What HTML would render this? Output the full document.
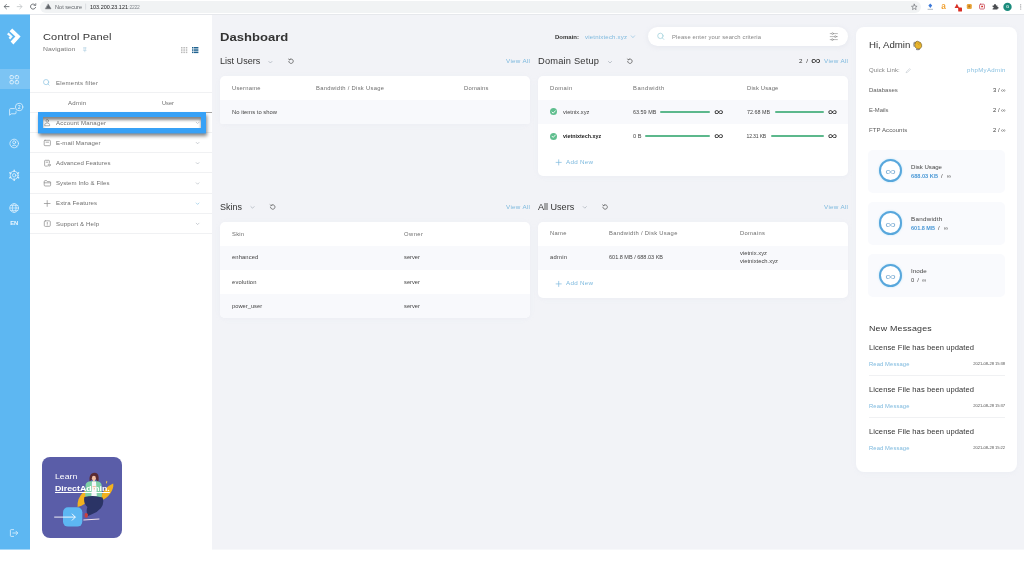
<!DOCTYPE html>
<html lang="en">
<head>
<meta charset="utf-8">
<title>DirectAdmin Dashboard</title>
<style>
*{box-sizing:border-box;margin:0;padding:0}
html,body{width:1024px;height:580px;overflow:hidden;background:#fff}
body{font-family:"Liberation Sans",sans-serif;position:relative;color:#333}
.a{position:absolute}
.t{position:absolute;white-space:nowrap}
#tx{position:absolute;left:0;top:0;width:1024px;height:580px;will-change:transform}
#chrome{left:0;top:0;width:1024px;height:15px;background:#fff;border-bottom:1px solid #e6e8ec}
#url{left:40px;top:1px;width:881px;height:11.5px;border-radius:6px;background:#f1f3f4}
#side{left:0;top:15px;width:30px;height:534px;background:#5db7f2}
#sideact{left:0;top:69px;width:30px;height:20px;background:#7cc4f4}
#nav{left:30px;top:15px;width:182px;height:534px;background:#fff}
#main{left:211.5px;top:15px;width:812.5px;height:534px;background:#f2f3f7}
.hl{height:1px;background:#f0f1f3}
.card{background:#fff;border-radius:5px;box-shadow:0 1px 5px rgba(200,205,220,.12)}
.stripe{background:#f8f9fc}
.bar{height:1.6px;background:#5cb88c;border-radius:1px}
.box{background:#f9fafd;border-radius:5px}
.ring{border:2.1px solid #58a7dc;border-radius:50%;background:#fff;box-shadow:0 0 2px rgba(120,205,245,.55)}
svg{position:absolute;overflow:visible}
</style>
</head>
<body>
<!-- browser chrome -->
<div id="chrome" class="a"></div>
<div id="url" class="a"></div>
<svg style="left:0;top:.4px" width="1024" height="15" viewBox="0 0 1024 15" fill="none" stroke-linecap="round" stroke-linejoin="round">
 <!-- back / forward / reload -->
 <path d="M9 6.6 H4.4 M6.4 4.4 L4.2 6.6 L6.4 8.8" stroke="#5f6368" stroke-width=".85"/>
 <path d="M17.2 6.6 H21.8 M19.8 4.4 L22 6.6 L19.8 8.8" stroke="#c4c7ca" stroke-width=".85"/>
 <path d="M35.2 5 A2.6 2.6 0 1 0 35.6 7.4" stroke="#5f6368" stroke-width=".85"/>
 <path d="M35.8 3.6 V5.4 H34" stroke="#5f6368" stroke-width=".7"/>
 <!-- warning -->
 <path d="M48.3 4.2 L51 8.8 H45.6 Z" fill="#5f6368" stroke="#5f6368" stroke-width=".5"/>
 <path d="M85.6 4 V9.2" stroke="#c8cbcf" stroke-width=".5"/>
 <!-- star -->
 <path d="M914.3 4.2 L915.1 6.1 L917.1 6.3 L915.6 7.6 L916.1 9.6 L914.3 8.5 L912.5 9.6 L913 7.6 L911.5 6.3 L913.5 6.1 Z" stroke="#5f6368" stroke-width=".6"/>
 <!-- extensions -->
 <path d="M930.3 3.4 L932.2 5.6 L930.3 8 L928.4 5.6 Z" fill="#3b78d8"/>
 <path d="M928 9.3 H932.6" stroke="#9aa7b8" stroke-width=".8"/>
 <path d="M954.6 8 L956.9 3.8 L959.2 8 Z" fill="#d93025"/>
 <rect x="958.2" y="7.6" width="3.8" height="4" rx=".6" fill="#d93025"/>
 <rect x="966.8" y="4" width="5" height="5" rx="1.2" fill="#e9a63c"/>
 <circle cx="969.3" cy="6.4" r="1.1" fill="#b9791f"/>
 <rect x="979.6" y="4.2" width="4.8" height="4.8" rx=".8" stroke="#c5475b" stroke-width=".8"/>
 <path d="M981.2 5.8 H983 V7.6 L982.1 7 L981.2 7.6 Z" fill="#d93025"/>
 <path d="M992.6 5.6 H994 Q993.6 4 995 4 Q996.4 4 996 5.6 H997.4 V7 Q998.8 6.8 998.6 8 Q998.4 8.8 997.4 8.6 V9.6 H992.6 V8.4 Q993.8 8.6 993.8 7.6 Q993.8 6.8 992.6 7 Z" fill="#4a4d51"/>
 <circle cx="1007.5" cy="6.9" r="4.2" fill="#1b8b7c"/>
 <circle cx="1020.7" cy="4.8" r=".6" fill="#8a8d91"/><circle cx="1020.7" cy="6.9" r=".6" fill="#8a8d91"/><circle cx="1020.7" cy="9" r=".6" fill="#8a8d91"/>
</svg>

<!-- app -->
<div class="a" style="left:0;top:14px;width:30px;height:1px;background:#9fd2f5"></div>
<div id="side" class="a"></div>
<div id="sideact" class="a"></div>
<div class="a" style="left:0;top:549px;width:30px;height:1px;background:#a6d8f8"></div>
<div class="a" style="left:211.5px;top:549px;width:812.5px;height:1px;background:#f7f8fa"></div>
<div id="nav" class="a"></div>
<div id="main" class="a"></div>
<!-- nav panel lines -->
<div class="a hl" style="left:30px;top:92px;width:182px"></div>
<div class="a hl" style="left:30px;top:112px;width:182px"></div>
<div class="a hl" style="left:30px;top:132px;width:182px"></div>
<div class="a hl" style="left:30px;top:152px;width:182px"></div>
<div class="a hl" style="left:30px;top:172px;width:182px"></div>
<div class="a hl" style="left:30px;top:193px;width:182px"></div>
<div class="a hl" style="left:30px;top:213px;width:182px"></div>
<div class="a hl" style="left:30px;top:233px;width:182px"></div>
<!-- nav icons -->
<svg style="left:0;top:0" width="212" height="580" viewBox="0 0 212 580" fill="none" stroke="#8a8a8a" stroke-width=".7" stroke-linecap="round" stroke-linejoin="round">
 <!-- pin -->
 <path d="M83.6 47.8 H86 M84 47.8 V49.6 L83.4 50.4 H86.2 L85.6 49.6 V47.8 M84.8 50.4 V51.8" stroke="#a9cbe0" stroke-width=".55"/>
 <!-- grid 3x3 -->
 <g stroke="none" fill="#b9b9b9">
  <rect x="181" y="47" width="1.5" height="1.5"/><rect x="183.4" y="47" width="1.5" height="1.5"/><rect x="185.8" y="47" width="1.5" height="1.5"/>
  <rect x="181" y="49.3" width="1.5" height="1.5"/><rect x="183.4" y="49.3" width="1.5" height="1.5"/><rect x="185.8" y="49.3" width="1.5" height="1.5"/>
  <rect x="181" y="51.6" width="1.5" height="1.5"/><rect x="183.4" y="51.6" width="1.5" height="1.5"/><rect x="185.8" y="51.6" width="1.5" height="1.5"/>
 </g>
 <!-- list -->
 <g stroke="none" fill="#1f628f">
  <rect x="192" y="47" width="1.5" height="1.5"/><rect x="194" y="47" width="4.4" height="1.5"/>
  <rect x="192" y="49.3" width="1.5" height="1.5"/><rect x="194" y="49.3" width="4.4" height="1.5"/>
  <rect x="192" y="51.6" width="1.5" height="1.5"/><rect x="194" y="51.6" width="4.4" height="1.5"/>
 </g>
 <!-- search -->
 <g stroke="#8ec4e2" stroke-width=".7"><circle cx="46.1" cy="82.1" r="2.6"/><path d="M48 84 L49.2 85.2"/></g>
 <!-- account -->
 <g><circle cx="47.2" cy="120.9" r="1.3"/><path d="M44.8 125.4 V124.6 Q44.8 123 47.2 123 Q49.6 123 49.6 124.6 V125.4 Z"/></g>
 <!-- email -->
 <g><rect x="44.2" y="140.3" width="6.2" height="5.4" rx=".8"/><path d="M46 142.2 H48.6"/></g>
 <!-- advanced -->
 <g><path d="M49.4 162.6 V161 Q49.4 160.3 48.7 160.3 H45.3 Q44.6 160.3 44.6 161 V165.4 Q44.6 166.1 45.3 166.1 H47.4"/><circle cx="49.2" cy="165" r="1.1"/><path d="M46.2 162.2 H47.8"/></g>
 <!-- files -->
 <g><path d="M44.2 181.4 Q44.2 180.6 45 180.6 H46.6 L47.4 181.6 H49.8 Q50.6 181.6 50.6 182.4 V185.2 Q50.6 186 49.8 186 H45 Q44.2 186 44.2 185.2 Z"/><path d="M44.2 182.8 H50.6"/></g>
 <!-- plus -->
 <g><path d="M47.2 200.6 V206.4 M44.3 203.5 H50.1"/></g>
 <!-- support -->
 <g><rect x="44.3" y="220.8" width="6" height="5.6" rx="1"/><path d="M47.3 222.4 V223.8 M47.3 224.9 V225"/></g>
 <!-- chevrons -->
 <g stroke="#a9b0b8" stroke-width=".6">
  <path d="M196.2 122.2 l1.4 1.4 l1.4 -1.4"/><path d="M196.2 142.4 l1.4 1.4 l1.4 -1.4"/><path d="M196.2 162.6 l1.4 1.4 l1.4 -1.4"/>
  <path d="M196.2 182.8 l1.4 1.4 l1.4 -1.4"/><path d="M196.2 203 l1.4 1.4 l1.4 -1.4" stroke="#7fbfe0"/><path d="M196.2 223.2 l1.4 1.4 l1.4 -1.4"/>
 </g>
</svg>
<div class="a" style="left:205px;top:112px;width:6.5px;height:1px;background:#a5a5a5"></div>
<!-- highlight box -->
<div class="a" style="left:38px;top:112px;width:168px;height:21px;border:5px solid #37a1f6;box-shadow:1px 3px 3.5px rgba(0,0,0,.48), inset 0 3px 3px rgba(0,0,0,.48)"></div>
<svg style="left:0;top:0" width="212" height="140" viewBox="0 0 212 140"><rect x="38" y="132.8" width="168" height=".6" fill="#37a1f6"/></svg>
<!-- promo card -->
<div class="a" style="left:42.2px;top:457.4px;width:80.2px;height:80.2px;border-radius:8px;background:#5a5da8"></div>
<svg style="left:0;top:0" width="212" height="580" viewBox="0 0 212 580">
 <!-- yellow leaves -->
 <path d="M77.6 507 Q77 498 83 492.5 Q87 488.8 90.4 487.4 Q91.6 492 89 498 Q86 505 77.6 507 Z" fill="#f3b21e"/>
 <path d="M100.6 500.5 Q101 494 105.4 489 Q109 485 113.2 483.4 Q114 487.6 110.6 493 Q106.6 499 100.6 500.5 Z" fill="#f3b21e"/>
 <path d="M106 480.4 l.6 1.2 l1.2 .2 l-1 .8 l.2 1.2 l-1 -.7 Z" fill="#f3c84a"/>
 <!-- hair -->
 <path d="M89.6 481.4 Q88.6 474.6 93 473 Q98 472 98.6 477 Q99 480 98 482 L95.6 479 L92 479.4 Z" fill="#5a2b34"/>
 <!-- face & neck -->
 <ellipse cx="93.9" cy="478.2" rx="2" ry="2.4" fill="#f3bfa3"/>
 <rect x="92.9" y="480" width="2" height="2.4" fill="#f3bfa3"/>
 <!-- jacket -->
 <path d="M85.6 484.6 Q86.4 481.6 90.6 481.2 L97.4 481.2 Q101 481.8 101.6 485 L102 496.6 Q98 498.6 94 498.2 Q89 498.4 85.2 496.4 Z" fill="#7fd0a6"/>
 <!-- shirt -->
 <path d="M92 481.4 L96 481.4 L96.8 496 L91.4 496 Z" fill="#f6f6fa"/>
 <path d="M92.6 486 h3.2 v3.4 h-3.2 Z" fill="#f3bfa3"/>
 <!-- pants -->
 <path d="M84.4 497 Q93 494.6 102.6 497.4 Q104.6 503 101 508 Q97 512.6 92.4 514 L88 516 Q85.6 512 87.4 507 Q83 503 84.4 497 Z" fill="#2b3466"/>
 <!-- shoe -->
 <path d="M84.8 513.4 Q86.6 512.4 88 514.2 L87.4 517.6 Q85.4 518 84.6 516.4 Z" fill="#c9413e"/>
 <!-- floor -->
 <path d="M83.4 519.4 L99.4 518.4 L99.4 519.6 L83.4 520.6 Z" fill="#f3e3ea"/>
 <!-- arrow button -->
 <rect x="63" y="507.3" width="19.3" height="19.3" rx="5" fill="#5db7f2"/>
 <path d="M54.6 517.1 H75 M72.2 514 L75.3 517.1 L72.2 520.2" fill="none" stroke="#fff" stroke-width=".9" stroke-linecap="round" stroke-linejoin="round"/>
</svg>
<!-- search pill -->
<div class="a" style="left:648px;top:27px;width:200px;height:19px;border-radius:9.5px;background:#fff;box-shadow:0 1px 5px rgba(200,205,220,.3)"></div>
<!-- cards -->
<div class="a card" style="left:220px;top:76px;width:310px;height:48px"></div>
<div class="a stripe" style="left:220px;top:100px;width:310px;height:24px;border-radius:0 0 2px 2px"></div>
<div class="a card" style="left:538px;top:76px;width:310px;height:100px"></div>
<div class="a stripe" style="left:538px;top:100px;width:310px;height:24px"></div>
<div class="a card" style="left:220px;top:222px;width:310px;height:96px"></div>
<div class="a stripe" style="left:220px;top:246px;width:310px;height:24px"></div>
<div class="a stripe" style="left:220px;top:294px;width:310px;height:24px;border-radius:0 0 5px 5px"></div>
<div class="a card" style="left:538px;top:222px;width:310px;height:75.5px"></div>
<div class="a stripe" style="left:538px;top:246px;width:310px;height:24px"></div>
<!-- bars -->
<div class="a bar" style="left:660.3px;top:111.2px;width:49.3px"></div>
<div class="a bar" style="left:645.4px;top:135.2px;width:64.2px"></div>
<div class="a bar" style="left:774.8px;top:111.2px;width:49px"></div>
<div class="a bar" style="left:771.2px;top:135.2px;width:52.6px"></div>
<!-- check circles -->
<div class="a" style="left:550.2px;top:108.4px;width:7px;height:7px;border-radius:50%;background:#5fbe8e"></div>
<div class="a" style="left:550.2px;top:132.6px;width:7px;height:7px;border-radius:50%;background:#5fbe8e"></div>
<!-- right panel -->
<div class="a card" style="left:856.3px;top:27px;width:161px;height:444.5px;border-radius:8px"></div>
<div class="a box" style="left:868.2px;top:150.3px;width:137.2px;height:43px"></div>
<div class="a box" style="left:868.2px;top:202px;width:137.2px;height:43px"></div>
<div class="a box" style="left:868.2px;top:253.7px;width:137.2px;height:43px"></div>
<div class="a ring" style="left:878.7px;top:158.6px;width:23.6px;height:23.6px"></div>
<div class="a ring" style="left:878.7px;top:211.2px;width:23.6px;height:23.6px"></div>
<div class="a ring" style="left:878.7px;top:263.7px;width:23.6px;height:23.6px"></div>
<div class="a hl" style="left:868.6px;top:375px;width:136.6px"></div>
<div class="a hl" style="left:868.6px;top:417px;width:136.6px"></div>
<!-- sidebar icons -->
<svg style="left:0;top:0" width="30" height="580" viewBox="0 0 30 580" fill="none" stroke="#fff" stroke-linecap="round" stroke-linejoin="round">
 <!-- logo -->
 <g stroke="none" fill="#fff">
  <path d="M12.2 28.6 L20.6 36.6 L13.4 44.4 L10.6 41.6 L15.4 36.6 L9.6 31.2 Z"/>
  <path d="M8.6 32.6 L12.8 36.6 L10.2 39.4 L8.6 37.8 L9.8 36.6 L7 34.2 Z" opacity=".95"/>
 </g>
 <!-- dashboard 2x2 -->
 <g stroke-width=".9" opacity=".8">
  <rect x="10" y="75.6" width="3.4" height="3.2" rx="1.1"/>
  <rect x="15.2" y="75.6" width="3.4" height="3.2" rx="1.1"/>
  <rect x="10" y="80.6" width="3.4" height="3.2" rx="1.1"/>
  <rect x="15.2" y="80.6" width="3.4" height="3.2" rx="1.1"/>
 </g>
 <!-- messages -->
 <g stroke-width=".85" opacity=".78">
  <path d="M14.4 108.6 H10.6 Q9.6 108.6 9.6 109.6 V115.2 L11.2 113.8 H15 Q16 113.8 16 112.8 V111.6"/>
  <circle cx="19.1" cy="107" r="3.7"/>
 </g>
 <!-- user -->
 <g stroke-width=".85" opacity=".78">
  <circle cx="14.2" cy="143.5" r="4.3"/>
  <circle cx="14.2" cy="142.3" r="1.5"/>
  <path d="M11.4 146.6 Q14.2 143.4 17 146.6"/>
 </g>
 <!-- gear -->
 <g stroke-width=".85" opacity=".78">
  <circle cx="14.2" cy="175.3" r="4"/>
  <circle cx="14.2" cy="175.3" r="1.7"/>
  <path d="M14.2 170.2v1.2M14.2 179.2v1.2M9.8 172.8l1 .6M17.6 177.2l1 .6M9.8 177.8l1-.6M17.6 173.4l1-.6" stroke-width="1.4"/>
 </g>
 <!-- globe -->
 <g stroke-width=".75" opacity=".78">
  <circle cx="14.2" cy="208" r="4.4"/>
  <ellipse cx="14.2" cy="208" rx="1.9" ry="4.4"/>
  <path d="M9.8 208h8.8M10.6 205.6h7.2M10.6 210.4h7.2"/>
 </g>
 <!-- logout -->
 <g stroke-width=".85" opacity=".78">
  <path d="M13.6 529.6 H11.2 Q10.4 529.6 10.4 530.4 V535.6 Q10.4 536.4 11.2 536.4 H13.6"/>
  <path d="M12.8 533 H17.6 M16 531.2 L17.8 533 L16 534.8"/>
 </g>
</svg>
<!-- main icons -->
<svg style="left:0;top:0" width="1024" height="580" viewBox="0 0 1024 580" fill="none" stroke="#444" stroke-width=".7" stroke-linecap="round" stroke-linejoin="round">
 <!-- domain dropdown chevron -->
 <path d="M631.2 35.8 l1.7 1.9 l1.7 -1.9" stroke="#93c4e2"/>
 <!-- search -->
 <g stroke="#98cdd8"><circle cx="660.4" cy="35.9" r="2.7"/><path d="M662.4 38 L663.8 39.4"/></g>
 <!-- filter sliders -->
 <g stroke="#8a8a8a" stroke-width=".6">
  <path d="M830.2 33.6 H837.4 M830.2 36.6 H837.4 M830.2 39.6 H837.4"/>
  <circle cx="832.6" cy="33.6" r=".9" fill="#fff"/><circle cx="835.4" cy="36.6" r=".9" fill="#fff"/><circle cx="832.4" cy="39.6" r=".9" fill="#fff"/>
 </g>
 <!-- section chevrons -->
 <g stroke="#9aa3ad" stroke-width=".6">
  <path d="M268.8 61.4 l1.6 1.6 l1.6 -1.6"/><path d="M608.4 61.4 l1.6 1.6 l1.6 -1.6"/>
  <path d="M250.9 206.6 l1.6 1.6 l1.6 -1.6"/><path d="M583.2 206.6 l1.6 1.6 l1.6 -1.6"/>
 </g>
 <!-- refresh icons -->
 <g stroke="#4a4a4a" stroke-width=".7">
  <path d="M289.28 59.75 A2.25 2.25 0 1 1 288.76 61.40" />
  <path d="M288.28 58.85 L289.38 59.85 L290.48 59.25" stroke-width=".5"/>
 </g>
 <g stroke="#4a4a4a" stroke-width=".7" transform="translate(338.9,0)">
  <path d="M289.28 59.75 A2.25 2.25 0 1 1 288.76 61.40" />
  <path d="M288.28 58.85 L289.38 59.85 L290.48 59.25" stroke-width=".5"/>
 </g>
 <g stroke="#4a4a4a" stroke-width=".7" transform="translate(-18.3,145.8)">
  <path d="M289.28 59.75 A2.25 2.25 0 1 1 288.76 61.40" />
  <path d="M288.28 58.85 L289.38 59.85 L290.48 59.25" stroke-width=".5"/>
 </g>
 <g stroke="#4a4a4a" stroke-width=".7" transform="translate(314.1,145.8)">
  <path d="M289.28 59.75 A2.25 2.25 0 1 1 288.76 61.40" />
  <path d="M288.28 58.85 L289.38 59.85 L290.48 59.25" stroke-width=".5"/>
 </g>
 <!-- checks -->
 <g stroke="#fff" stroke-width=".9">
  <path d="M552 112 l1.2 1.2 l2.2 -2.4"/><path d="M552 136.2 l1.2 1.2 l2.2 -2.4"/>
 </g>
 <!-- plus add new -->
 <g stroke="#7db9de" stroke-width=".7">
  <path d="M558.7 159.8 v5.2 M556.1 162.4 h5.2"/><path d="M558.7 281.3 v5.2 M556.1 283.9 h5.2"/>
 </g>
 <!-- pencil -->
 <path d="M906.6 71.6 L909.6 68.6 L910.4 69.4 L907.4 72.4 L906.4 72.6 Z" stroke="#b5bcc4" stroke-width=".5"/>
 <!-- waving hand emoji -->
 <g stroke="none">
  <path d="M915 43 Q915.6 41 917.6 41.2 L920.6 42.6 Q922.2 44.4 921.6 46.8 Q920.6 49.2 918.2 49 Q916 48.8 915 46.8 Q914.4 45 915 43 Z" fill="#e9b62f" stroke="#4a3a12" stroke-width=".5"/>
  <path d="M914 46.4 Q913.2 44.2 914.2 42.2 M916.4 49.6 Q918 50 919.4 49.6" stroke="#3a3a3a" stroke-width=".6" fill="none"/>
  <path d="M917 42.6 L919 45 M918.6 42.4 L920.4 44.8" stroke="#b98618" stroke-width=".45" fill="none"/>
 </g>
</svg>

<div id="tx">
<span class="t" style="left:55px;top:4px;font-size:4.94px;line-height:8px;color:#5f6368;transform:scaleX(1.13);transform-origin:0 50%;">Not secure</span>
<span class="t" style="left:90px;top:4px;font-size:4.94px;line-height:8px;color:#202124;transform:scaleX(1.107);transform-origin:0 50%;">103.200.23.121</span>
<span class="t" style="left:128.3px;top:4px;font-size:4.94px;line-height:8px;color:#80868b;letter-spacing:-0.215px;">:2222</span>
<span class="t" style="left:42.5px;top:30px;font-size:9.69px;line-height:14px;color:#333;letter-spacing:0.123px;transform:scaleX(1.14);transform-origin:0 50%;">Control Panel</span>
<span class="t" style="left:42.7px;top:45px;font-size:5.98px;line-height:9px;color:#777;letter-spacing:0.024px;transform:scaleX(1.14);transform-origin:0 50%;">Navigation</span>
<span class="t" style="left:56px;top:79px;font-size:5.32px;line-height:8px;color:#6e6e6e;letter-spacing:0.226px;transform:scaleX(1.14);transform-origin:0 50%;">Elements filter</span>
<span class="t" style="left:68px;top:99px;font-size:5.32px;line-height:8px;color:#6e6e6e;letter-spacing:0.226px;transform:scaleX(1.14);transform-origin:0 50%;">Admin</span>
<span class="t" style="left:161.5px;top:99px;font-size:5.32px;line-height:8px;color:#6e6e6e;transform:scaleX(1.07);transform-origin:0 50%;">User</span>
<span class="t" style="left:56px;top:119px;font-size:5.32px;line-height:8px;color:#6e6e6e;letter-spacing:0.159px;transform:scaleX(1.14);transform-origin:0 50%;">Account Manager</span>
<span class="t" style="left:56px;top:139px;font-size:5.32px;line-height:8px;color:#6e6e6e;letter-spacing:0.118px;transform:scaleX(1.14);transform-origin:0 50%;">E-mail Manager</span>
<span class="t" style="left:56px;top:159px;font-size:5.32px;line-height:8px;color:#6e6e6e;letter-spacing:0.108px;transform:scaleX(1.14);transform-origin:0 50%;">Advanced Features</span>
<span class="t" style="left:56px;top:179px;font-size:5.32px;line-height:8px;color:#6e6e6e;letter-spacing:0.065px;transform:scaleX(1.14);transform-origin:0 50%;">System Info &amp; Files</span>
<span class="t" style="left:56px;top:199px;font-size:5.32px;line-height:8px;color:#6e6e6e;letter-spacing:0.086px;transform:scaleX(1.14);transform-origin:0 50%;">Extra Features</span>
<span class="t" style="left:56px;top:220px;font-size:5.32px;line-height:8px;color:#6e6e6e;letter-spacing:0.13px;transform:scaleX(1.14);transform-origin:0 50%;">Support &amp; Help</span>
<span class="t" style="left:10.3px;top:219px;font-size:5.79px;line-height:9px;color:#eef7fe;font-weight:700;letter-spacing:-0.031px;">EN</span>
<span class="t" style="left:54.5px;top:471px;font-size:7.79px;line-height:11px;color:#fff;transform:scaleX(1.125);transform-origin:0 50%;">Learn</span>
<span class="t" style="left:54.5px;top:483px;font-size:7.79px;line-height:11px;color:#fff;font-weight:700;transform:scaleX(1.131);transform-origin:0 50%;text-decoration:underline;text-underline-offset:.5px;text-decoration-thickness:.7px;">DirectAdmin.</span>
<span class="t" style="left:220.1px;top:29px;font-size:11.59px;line-height:16px;color:#333;font-weight:700;transform:scaleX(1.128);transform-origin:0 50%;">Dashboard</span>
<span class="t" style="left:555px;top:33px;font-size:5.32px;line-height:8px;color:#333;font-weight:700;transform:scaleX(1.129);transform-origin:0 50%;">Domain:</span>
<span class="t" style="left:585px;top:33px;font-size:5.32px;line-height:8px;color:#7db9de;letter-spacing:0.164px;transform:scaleX(1.14);transform-origin:0 50%;">vietnixtech.xyz</span>
<span class="t" style="left:672px;top:33px;font-size:5.13px;line-height:8px;color:#858585;letter-spacing:0.134px;transform:scaleX(1.14);transform-origin:0 50%;">Please enter your search criteria</span>
<span class="t" style="left:219.8px;top:56px;font-size:8.17px;line-height:12px;color:#333;transform:scaleX(1.111);transform-origin:0 50%;">List Users</span>
<span class="t" style="left:538px;top:56px;font-size:8.17px;line-height:12px;color:#333;letter-spacing:0.166px;transform:scaleX(1.14);transform-origin:0 50%;">Domain Setup</span>
<span class="t" style="left:219.8px;top:202px;font-size:8.17px;line-height:12px;color:#333;transform:scaleX(1.103);transform-origin:0 50%;">Skins</span>
<span class="t" style="left:538px;top:202px;font-size:8.17px;line-height:12px;color:#333;transform:scaleX(1.109);transform-origin:0 50%;">All Users</span>
<span class="t" style="left:505.8px;top:57px;font-size:5.51px;line-height:9px;color:#7db9de;letter-spacing:0.269px;transform:scaleX(1.14);transform-origin:0 50%;">View All</span>
<span class="t" style="left:824px;top:57px;font-size:5.51px;line-height:9px;color:#7db9de;letter-spacing:0.269px;transform:scaleX(1.14);transform-origin:0 50%;">View All</span>
<span class="t" style="left:505.8px;top:203px;font-size:5.51px;line-height:9px;color:#7db9de;letter-spacing:0.269px;transform:scaleX(1.14);transform-origin:0 50%;">View All</span>
<span class="t" style="left:824px;top:203px;font-size:5.51px;line-height:9px;color:#7db9de;letter-spacing:0.269px;transform:scaleX(1.14);transform-origin:0 50%;">View All</span>
<span class="t" style="left:799px;top:57px;font-size:5.51px;line-height:9px;color:#333;letter-spacing:0.885px;transform:scaleX(1.14);transform-origin:0 50%;">2 /</span>
<span class="t" style="left:811.2px;top:52px;font-size:13.3px;line-height:18px;color:#222;transform:scaleY(.78);">∞</span>
<span class="t" style="left:231.8px;top:84px;font-size:5.13px;line-height:8px;color:#6e6e6e;letter-spacing:0.207px;transform:scaleX(1.14);transform-origin:0 50%;">Username</span>
<span class="t" style="left:316.4px;top:84px;font-size:5.13px;line-height:8px;color:#6e6e6e;letter-spacing:0.249px;transform:scaleX(1.14);transform-origin:0 50%;">Bandwidth / Disk Usage</span>
<span class="t" style="left:464px;top:84px;font-size:5.13px;line-height:8px;color:#6e6e6e;letter-spacing:0.195px;transform:scaleX(1.14);transform-origin:0 50%;">Domains</span>
<span class="t" style="left:231.8px;top:108px;font-size:5.13px;line-height:8px;color:#444;letter-spacing:0.011px;transform:scaleX(1.14);transform-origin:0 50%;">No items to show</span>
<span class="t" style="left:550px;top:84px;font-size:5.13px;line-height:8px;color:#6e6e6e;letter-spacing:0.36px;transform:scaleX(1.14);transform-origin:0 50%;">Domain</span>
<span class="t" style="left:632.5px;top:84px;font-size:5.13px;line-height:8px;color:#6e6e6e;letter-spacing:0.44px;transform:scaleX(1.14);transform-origin:0 50%;">Bandwidth</span>
<span class="t" style="left:746.6px;top:84px;font-size:5.13px;line-height:8px;color:#6e6e6e;letter-spacing:0.139px;transform:scaleX(1.14);transform-origin:0 50%;">Disk Usage</span>
<span class="t" style="left:563px;top:108px;font-size:5.13px;line-height:8px;color:#444;transform:scaleX(1.117);transform-origin:0 50%;">vietnix.xyz</span>
<span class="t" style="left:563px;top:132px;font-size:5.13px;line-height:8px;color:#222;font-weight:700;transform:scaleX(1.047);transform-origin:0 50%;">vietnixtech.xyz</span>
<span class="t" style="left:632.5px;top:108px;font-size:5.13px;line-height:8px;color:#444;transform:scaleX(1.062);transform-origin:0 50%;">63.59 MB</span>
<span class="t" style="left:632.5px;top:132px;font-size:5.13px;line-height:8px;color:#444;transform:scaleX(1.103);transform-origin:0 50%;">0 B</span>
<span class="t" style="left:746.6px;top:108px;font-size:5.13px;line-height:8px;color:#444;transform:scaleX(1.053);transform-origin:0 50%;">72.68 MB</span>
<span class="t" style="left:746.6px;top:132px;font-size:5.13px;line-height:8px;color:#444;letter-spacing:-0.199px;">12.31 KB</span>
<span class="t" style="left:565.7px;top:158px;font-size:5.51px;line-height:9px;color:#7db9de;letter-spacing:0.226px;transform:scaleX(1.14);transform-origin:0 50%;">Add New</span>
<span class="t" style="left:565.7px;top:279px;font-size:5.51px;line-height:9px;color:#7db9de;letter-spacing:0.226px;transform:scaleX(1.14);transform-origin:0 50%;">Add New</span>
<span class="t" style="left:714.2px;top:103px;font-size:12.73px;line-height:17px;color:#222;transform:scaleY(.78);">∞</span>
<span class="t" style="left:714.2px;top:127px;font-size:12.73px;line-height:17px;color:#222;transform:scaleY(.78);">∞</span>
<span class="t" style="left:828.1px;top:103px;font-size:12.73px;line-height:17px;color:#222;transform:scaleY(.78);">∞</span>
<span class="t" style="left:828.1px;top:127px;font-size:12.73px;line-height:17px;color:#222;transform:scaleY(.78);">∞</span>
<span class="t" style="left:231.7px;top:230px;font-size:5.13px;line-height:8px;color:#6e6e6e;letter-spacing:0.21px;transform:scaleX(1.14);transform-origin:0 50%;">Skin</span>
<span class="t" style="left:404.3px;top:230px;font-size:5.13px;line-height:8px;color:#6e6e6e;letter-spacing:0.389px;transform:scaleX(1.14);transform-origin:0 50%;">Owner</span>
<span class="t" style="left:231.7px;top:253px;font-size:5.13px;line-height:8px;color:#444;letter-spacing:0.079px;transform:scaleX(1.14);transform-origin:0 50%;">enhanced</span>
<span class="t" style="left:404.3px;top:253px;font-size:5.13px;line-height:8px;color:#444;transform:scaleX(1.123);transform-origin:0 50%;">server</span>
<span class="t" style="left:231.7px;top:278px;font-size:5.13px;line-height:8px;color:#444;letter-spacing:0.122px;transform:scaleX(1.14);transform-origin:0 50%;">evolution</span>
<span class="t" style="left:404.3px;top:278px;font-size:5.13px;line-height:8px;color:#444;transform:scaleX(1.123);transform-origin:0 50%;">server</span>
<span class="t" style="left:231.7px;top:302px;font-size:5.13px;line-height:8px;color:#444;transform:scaleX(1.124);transform-origin:0 50%;">power_user</span>
<span class="t" style="left:404.3px;top:302px;font-size:5.13px;line-height:8px;color:#444;transform:scaleX(1.123);transform-origin:0 50%;">server</span>
<span class="t" style="left:550px;top:229px;font-size:5.13px;line-height:8px;color:#6e6e6e;letter-spacing:0.238px;transform:scaleX(1.14);transform-origin:0 50%;">Name</span>
<span class="t" style="left:608.6px;top:229px;font-size:5.13px;line-height:8px;color:#6e6e6e;letter-spacing:0.266px;transform:scaleX(1.14);transform-origin:0 50%;">Bandwidth / Disk Usage</span>
<span class="t" style="left:740.4px;top:229px;font-size:5.13px;line-height:8px;color:#6e6e6e;letter-spacing:0.268px;transform:scaleX(1.14);transform-origin:0 50%;">Domains</span>
<span class="t" style="left:550px;top:253px;font-size:5.13px;line-height:8px;color:#444;letter-spacing:0.236px;transform:scaleX(1.14);transform-origin:0 50%;">admin</span>
<span class="t" style="left:608.6px;top:253px;font-size:5.13px;line-height:8px;color:#444;transform:scaleX(1.077);transform-origin:0 50%;">601.8 MB / 688.03 KB</span>
<span class="t" style="left:740.4px;top:249px;font-size:5.13px;line-height:8px;color:#444;letter-spacing:0.004px;transform:scaleX(1.14);transform-origin:0 50%;">vietnix.xyz</span>
<span class="t" style="left:740.4px;top:257px;font-size:5.13px;line-height:8px;color:#444;transform:scaleX(1.14);transform-origin:0 50%;">vietnixtech.xyz</span>
<span class="t" style="left:868.7px;top:39px;font-size:8.55px;line-height:12px;color:#333;transform:scaleX(1.129);transform-origin:0 50%;">Hi, Admin</span>
<span class="t" style="left:868.7px;top:66px;font-size:5.32px;line-height:8px;color:#858585;letter-spacing:0.074px;transform:scaleX(1.14);transform-origin:0 50%;">Quick Link:</span>
<span class="t" style="left:967px;top:66px;font-size:5.32px;line-height:8px;color:#86bfe0;letter-spacing:0.306px;transform:scaleX(1.14);transform-origin:0 50%;">phpMyAdmin</span>
<span class="t" style="left:868.7px;top:86px;font-size:5.32px;line-height:8px;color:#5c5c5c;transform:scaleX(1.134);transform-origin:0 50%;">Databases</span>
<span class="t" style="left:868.7px;top:106px;font-size:5.32px;line-height:8px;color:#5c5c5c;transform:scaleX(1.101);transform-origin:0 50%;">E-Mails</span>
<span class="t" style="left:868.7px;top:126px;font-size:5.32px;line-height:8px;color:#5c5c5c;letter-spacing:0.056px;transform:scaleX(1.14);transform-origin:0 50%;">FTP Accounts</span>
<span class="t" style="left:993px;top:86px;font-size:5.32px;line-height:8px;color:#444;transform:scaleX(1.119);transform-origin:0 50%;">3 / ∞</span>
<span class="t" style="left:993px;top:106px;font-size:5.32px;line-height:8px;color:#444;transform:scaleX(1.119);transform-origin:0 50%;">2 / ∞</span>
<span class="t" style="left:993px;top:126px;font-size:5.32px;line-height:8px;color:#444;transform:scaleX(1.119);transform-origin:0 50%;">2 / ∞</span>
<span class="t" style="left:911px;top:163px;font-size:5.51px;line-height:9px;color:#444;transform:scaleX(1.102);transform-origin:0 50%;">Disk Usage</span>
<span class="t" style="left:911px;top:172px;font-size:5.13px;line-height:8px;color:#4a98d6;font-weight:700;transform:scaleX(1.101);transform-origin:0 50%;">688.03 KB</span>
<span class="t" style="left:941px;top:172px;font-size:5.13px;line-height:8px;color:#444;letter-spacing:1.128px;transform:scaleX(1.14);transform-origin:0 50%;">/ ∞</span>
<span class="t" style="left:911px;top:215px;font-size:5.51px;line-height:9px;color:#444;letter-spacing:0.221px;transform:scaleX(1.14);transform-origin:0 50%;">Bandwidth</span>
<span class="t" style="left:911px;top:224px;font-size:5.13px;line-height:8px;color:#4a98d6;font-weight:700;transform:scaleX(1.079);transform-origin:0 50%;">601.8 MB</span>
<span class="t" style="left:938px;top:224px;font-size:5.13px;line-height:8px;color:#444;letter-spacing:1.128px;transform:scaleX(1.14);transform-origin:0 50%;">/ ∞</span>
<span class="t" style="left:911px;top:267px;font-size:5.51px;line-height:9px;color:#444;letter-spacing:0.024px;transform:scaleX(1.14);transform-origin:0 50%;">Inode</span>
<span class="t" style="left:911px;top:276px;font-size:5.13px;line-height:8px;color:#444;letter-spacing:0.638px;transform:scaleX(1.14);transform-origin:0 50%;">0 / ∞</span>
<span class="t" style="left:868.6px;top:323px;font-size:7.79px;line-height:11px;color:#333;letter-spacing:0.163px;transform:scaleX(1.14);transform-origin:0 50%;">New Messages</span>
<span class="t" style="left:868.6px;top:343px;font-size:6.65px;line-height:10px;color:#333;letter-spacing:0.056px;transform:scaleX(1.14);transform-origin:0 50%;">License File has been updated</span>
<span class="t" style="left:868.6px;top:360px;font-size:5.13px;line-height:8px;color:#7db9de;letter-spacing:0.087px;transform:scaleX(1.14);transform-origin:0 50%;">Read Message</span>
<span class="t" style="left:973.2px;top:360px;font-size:4.18px;line-height:7px;color:#555;letter-spacing:-0.055px;">2021-08-28 15:38</span>
<span class="t" style="left:868.6px;top:385px;font-size:6.65px;line-height:10px;color:#333;letter-spacing:0.056px;transform:scaleX(1.14);transform-origin:0 50%;">License File has been updated</span>
<span class="t" style="left:868.6px;top:402px;font-size:5.13px;line-height:8px;color:#7db9de;letter-spacing:0.087px;transform:scaleX(1.14);transform-origin:0 50%;">Read Message</span>
<span class="t" style="left:973.2px;top:402px;font-size:4.18px;line-height:7px;color:#555;letter-spacing:-0.055px;">2021-08-28 15:37</span>
<span class="t" style="left:868.6px;top:427px;font-size:6.65px;line-height:10px;color:#333;letter-spacing:0.056px;transform:scaleX(1.14);transform-origin:0 50%;">License File has been updated</span>
<span class="t" style="left:868.6px;top:444px;font-size:5.13px;line-height:8px;color:#7db9de;letter-spacing:0.087px;transform:scaleX(1.14);transform-origin:0 50%;">Read Message</span>
<span class="t" style="left:973.2px;top:444px;font-size:4.18px;line-height:7px;color:#555;letter-spacing:-0.055px;">2021-08-28 15:22</span>
<span class="t" style="left:885.6px;top:161px;font-size:14.82px;line-height:20px;color:#86b3d6;transform:scaleY(.72);">∞</span>
<span class="t" style="left:885.6px;top:214px;font-size:14.82px;line-height:20px;color:#86b3d6;transform:scaleY(.72);">∞</span>
<span class="t" style="left:885.6px;top:266px;font-size:14.82px;line-height:20px;color:#86b3d6;transform:scaleY(.72);">∞</span>
<span class="t" style="left:17.9px;top:104px;font-size:4.56px;line-height:7px;color:#fff;">2</span>
<span class="t" style="left:1006px;top:3px;font-size:4.18px;line-height:7px;color:#d7efe9;font-weight:700;">G</span>
<span class="t" style="left:941.2px;top:1px;font-size:8.17px;line-height:12px;color:#f0a030;font-weight:700;">a</span>
</div>
</body>
</html>
